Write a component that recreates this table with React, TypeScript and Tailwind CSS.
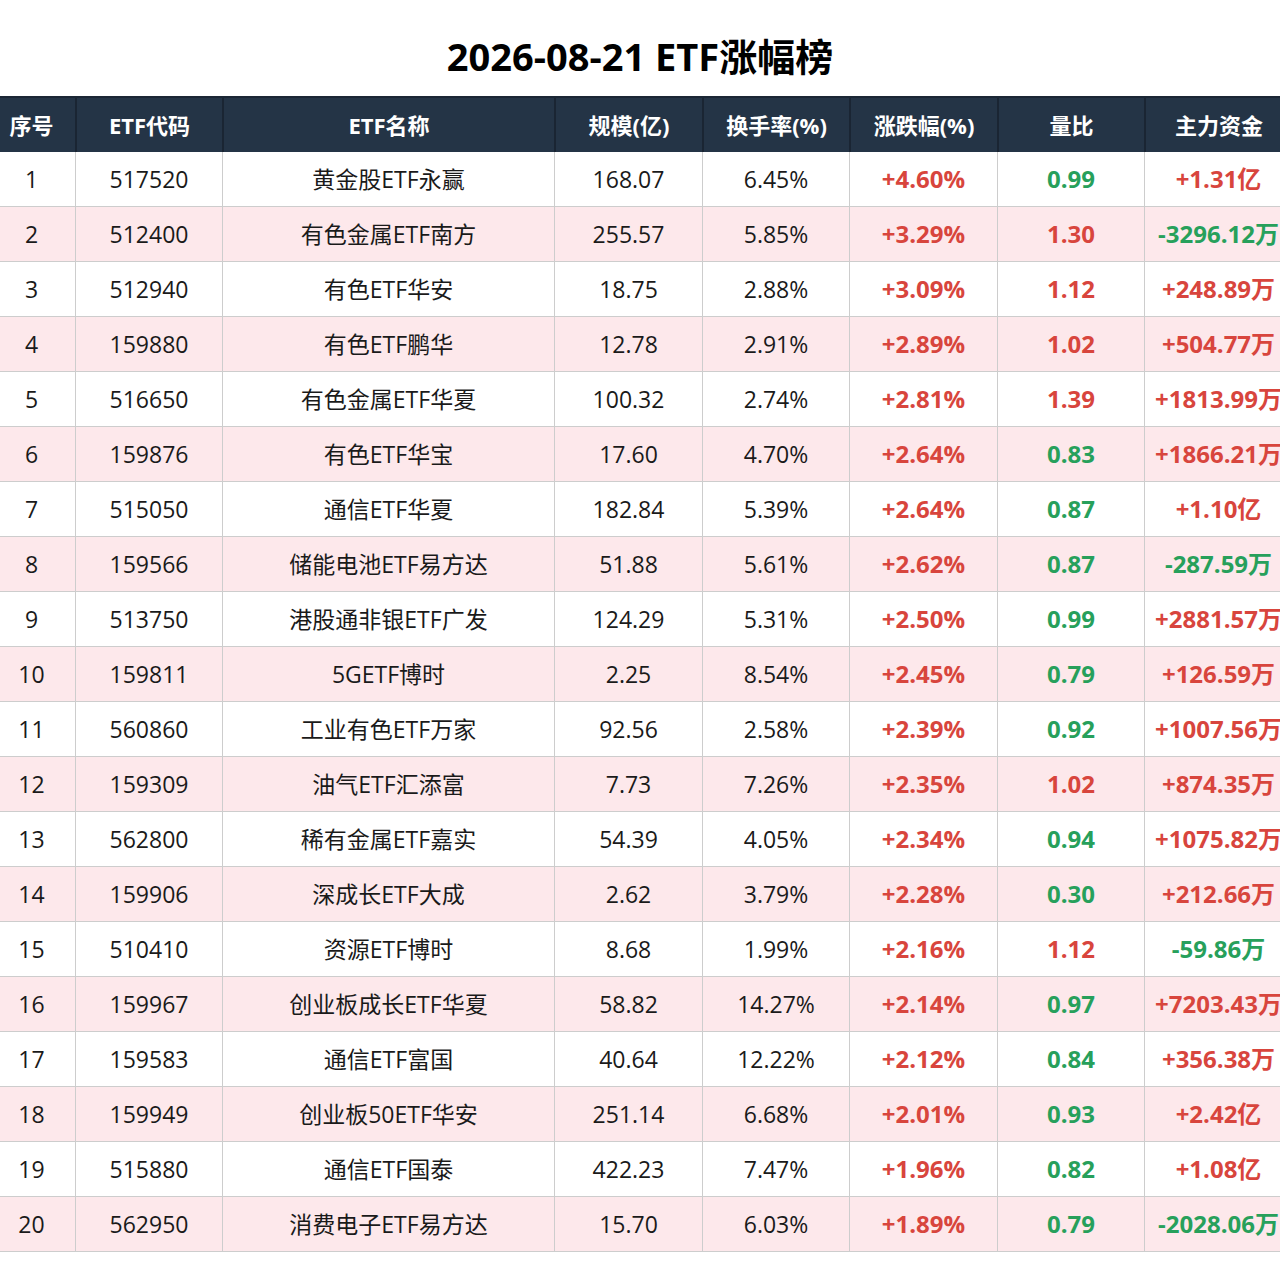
import React from "react";

type Row = [string, string, string, string, string, string, string, string];

const rows: Row[] = [
  ["1", "517520", "黄金股ETF永赢", "168.07", "6.45%", "+4.60%", "0.99", "+1.31亿"],
  ["2", "512400", "有色金属ETF南方", "255.57", "5.85%", "+3.29%", "1.30", "-3296.12万"],
  ["3", "512940", "有色ETF华安", "18.75", "2.88%", "+3.09%", "1.12", "+248.89万"],
  ["4", "159880", "有色ETF鹏华", "12.78", "2.91%", "+2.89%", "1.02", "+504.77万"],
  ["5", "516650", "有色金属ETF华夏", "100.32", "2.74%", "+2.81%", "1.39", "+1813.99万"],
  ["6", "159876", "有色ETF华宝", "17.60", "4.70%", "+2.64%", "0.83", "+1866.21万"],
  ["7", "515050", "通信ETF华夏", "182.84", "5.39%", "+2.64%", "0.87", "+1.10亿"],
  ["8", "159566", "储能电池ETF易方达", "51.88", "5.61%", "+2.62%", "0.87", "-287.59万"],
  ["9", "513750", "港股通非银ETF广发", "124.29", "5.31%", "+2.50%", "0.99", "+2881.57万"],
  ["10", "159811", "5GETF博时", "2.25", "8.54%", "+2.45%", "0.79", "+126.59万"],
  ["11", "560860", "工业有色ETF万家", "92.56", "2.58%", "+2.39%", "0.92", "+1007.56万"],
  ["12", "159309", "油气ETF汇添富", "7.73", "7.26%", "+2.35%", "1.02", "+874.35万"],
  ["13", "562800", "稀有金属ETF嘉实", "54.39", "4.05%", "+2.34%", "0.94", "+1075.82万"],
  ["14", "159906", "深成长ETF大成", "2.62", "3.79%", "+2.28%", "0.30", "+212.66万"],
  ["15", "510410", "资源ETF博时", "8.68", "1.99%", "+2.16%", "1.12", "-59.86万"],
  ["16", "159967", "创业板成长ETF华夏", "58.82", "14.27%", "+2.14%", "0.97", "+7203.43万"],
  ["17", "159583", "通信ETF富国", "40.64", "12.22%", "+2.12%", "0.84", "+356.38万"],
  ["18", "159949", "创业板50ETF华安", "251.14", "6.68%", "+2.01%", "0.93", "+2.42亿"],
  ["19", "515880", "通信ETF国泰", "422.23", "7.47%", "+1.96%", "0.82", "+1.08亿"],
  ["20", "562950", "消费电子ETF易方达", "15.70", "6.03%", "+1.89%", "0.79", "-2028.06万"],
];

const headers = ["序号", "ETF代码", "ETF名称", "规模(亿)", "换手率(%)", "涨跌幅(%)", "量比", "主力资金"];
const widths = ["w-[75px] pr-[12px]", "w-[147px]", "w-[332px]", "w-[148px]", "w-[147px]", "w-[148px]", "w-[147px]", "w-[148px]"];

const RED = "text-[#d8453d]";
const GREEN = "text-[#27a05b]";

function colorFor(col: number, v: string): string {
  if (col === 5) return `font-bold text-[24px] ${v.startsWith("-") ? GREEN : RED}`;
  if (col === 6) return `font-bold text-[24px] ${parseFloat(v) >= 1 ? RED : GREEN}`;
  if (col === 7) return `font-bold text-[24px] ${v.startsWith("-") ? GREEN : RED}`;
  return "text-[23px] text-[#1a1a1a]";
}

export default function App() {
  return (
    <div
      className="w-[1280px] h-[1288px] bg-white overflow-hidden"
      style={{ fontFamily: '"Open Sans", "Noto Sans CJK SC", sans-serif' }}
    >
      <div className="h-[96px] pt-[16px] flex items-center justify-center">
        <h1 className="text-[38px] font-bold text-black">2026-08-21 ETF涨幅榜</h1>
      </div>
      <div className="w-[1294px]">
        <div className="flex h-[56px] bg-[#243446] border-t-[2px] border-[#1b2735]">
          {headers.map((h, i) => (
            <div
              key={i}
              className={`${widths[i]} shrink-0 flex items-center justify-center text-white font-bold text-[22px] ${
                i > 0 ? "border-l-[2px] border-[#1a2533]" : ""
              }`}
            >
              {h}
            </div>
          ))}
        </div>
        {rows.map((r, ri) => (
          <div
            key={ri}
            className={`flex h-[55px] border-b border-[#cdcdcd] ${ri % 2 === 1 ? "bg-[#fde8eb]" : "bg-white"}`}
          >
            {r.map((v, ci) => (
              <div
                key={ci}
                className={`${widths[ci]} shrink-0 flex items-center justify-center whitespace-nowrap ${
                  ci > 0 ? "border-l border-[#cdcdcd]" : ""
                } ${colorFor(ci, v)}`}
              >
                {v}
              </div>
            ))}
          </div>
        ))}
      </div>
    </div>
  );
}
